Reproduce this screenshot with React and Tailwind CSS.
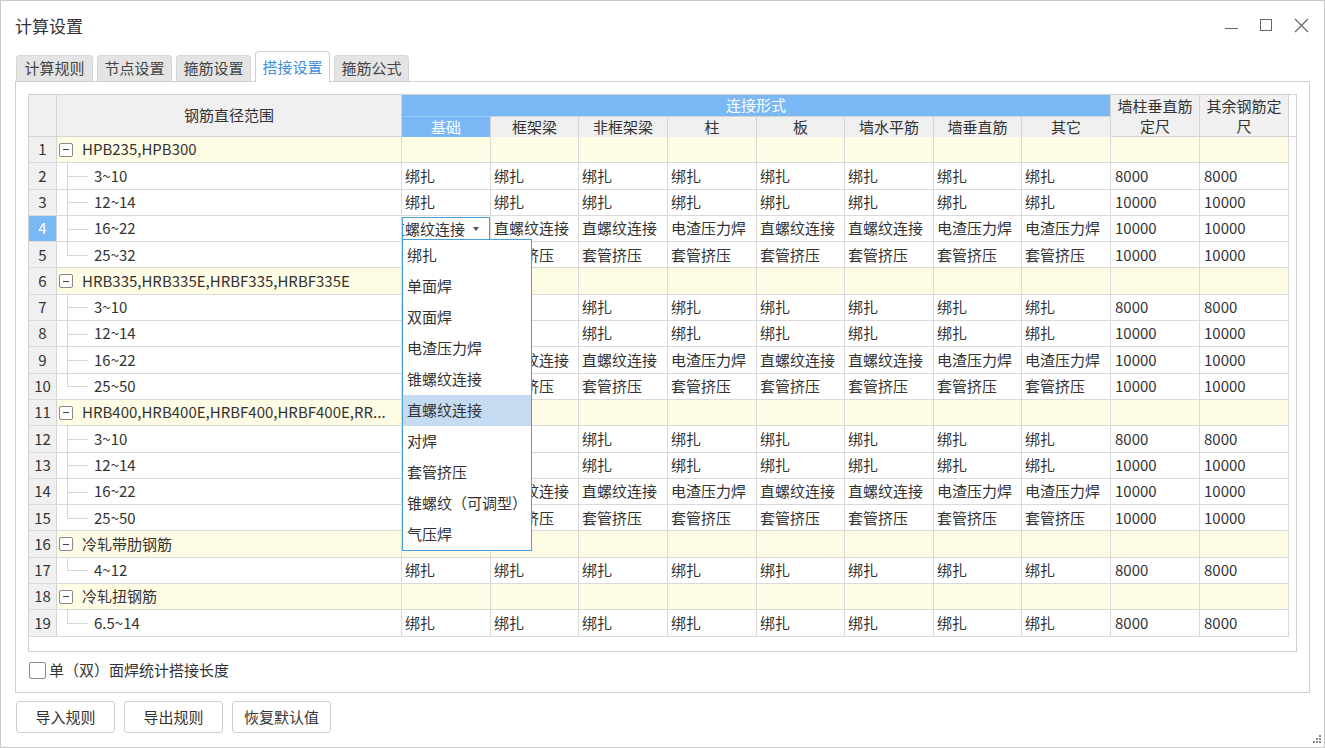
import React from "react";

const FONT = { fontFamily: '"Noto Sans CJK SC", "Noto Sans", sans-serif' };

const B = Array(8).fill("绑扎");
const T = Array(8).fill("套管挤压");
const Z = [
  "直螺纹连接",
  "直螺纹连接",
  "直螺纹连接",
  "电渣压力焊",
  "直螺纹连接",
  "直螺纹连接",
  "电渣压力焊",
  "电渣压力焊",
];

const rows = [
  { g: "HPB235,HPB300" },
  { n: "3~10", v: B, d: "8000" },
  { n: "12~14", v: B, d: "10000" },
  { n: "16~22", v: Z, d: "10000", edit: true },
  { n: "25~32", v: T, d: "10000", last: true },
  { g: "HRB335,HRB335E,HRBF335,HRBF335E" },
  { n: "3~10", v: B, d: "8000" },
  { n: "12~14", v: B, d: "10000" },
  { n: "16~22", v: Z, d: "10000" },
  { n: "25~50", v: T, d: "10000", last: true },
  { g: "HRB400,HRB400E,HRBF400,HRBF400E,RR..." },
  { n: "3~10", v: B, d: "8000" },
  { n: "12~14", v: B, d: "10000" },
  { n: "16~22", v: Z, d: "10000" },
  { n: "25~50", v: T, d: "10000", last: true },
  { g: "冷轧带肋钢筋" },
  { n: "4~12", v: B, d: "8000", last: true },
  { g: "冷轧扭钢筋" },
  { n: "6.5~14", v: B, d: "8000", last: true },
];

const colW = ["w-[89px]", "w-[88px]", "w-[89px]", "w-[89px]", "w-[88px]", "w-[89px]", "w-[88px]", "w-[89px]"];
const colNames = ["基础", "框架梁", "非框架梁", "柱", "板", "墙水平筋", "墙垂直筋", "其它"];

const options = [
  "绑扎",
  "单面焊",
  "双面焊",
  "电渣压力焊",
  "锥螺纹连接",
  "直螺纹连接",
  "对焊",
  "套管挤压",
  "锥螺纹（可调型）",
  "气压焊",
];

const tabs = ["计算规则", "节点设置", "箍筋设置", "搭接设置", "箍筋公式"];

// 下拉框
const Dropdown = () => (
  <div className="absolute top-[23px] left-[0px] z-20 w-[130px] border border-[#45a0dc] bg-white">
    {options.map((o, i) => (
      <div
        key={i}
        className={`h-[31px] flex items-center pl-[4px] text-[15px] text-[#333] whitespace-nowrap ${
          i === 5 ? "bg-[#c5dbf1]" : ""
        }`}
      >
        {o}
      </div>
    ))}
  </div>
);

const Row = ({ r, idx }) => {
  const group = !!r.g;
  const bg = group ? "bg-[#fffce6]" : "bg-white";
  return (
    <div className="flex h-[26.3px] border-b border-[#dadada] text-[15px] text-[#333]">
      <div
        className={`w-[28px] shrink-0 flex items-center justify-center border-r border-[#d4d4d4] ${
          idx === 4 ? "bg-[#7ab8f5] text-white" : "bg-[#f0f0f0]"
        }`}
      >
        {idx}
      </div>
      <div className={`w-[345px] shrink-0 relative flex items-center border-r border-[#dadada] ${bg}`}>
        {group ? (
          <>
            <div className="ml-[2px] w-[14px] h-[14px] border border-[#8a8a8a] rounded-[2px] flex items-center justify-center bg-white">
              <div className="w-[6px] h-px bg-[#444]" />
            </div>
            <span className="ml-[9px] whitespace-nowrap">{r.g}</span>
          </>
        ) : (
          <>
            <div
              className={`absolute left-[10px] top-0 w-px bg-[#d6d6d6] ${
                r.last ? "h-1/2" : "h-full"
              }`}
            />
            <div className="absolute left-[10px] top-1/2 w-[21px] h-px bg-[#d6d6d6]" />
            <span className="ml-[37px]">{r.n}</span>
          </>
        )}
      </div>
      {colW.map((w, i) => (
        <div
          key={i}
          className={`${w} shrink-0 relative flex items-center border-r border-[#dadada] ${bg}`}
        >
          {r.edit && i === 0 ? (
            <>
              <div className="absolute inset-0 top-px border border-[#45a0dc] bg-white flex items-center overflow-hidden">
                <span className="ml-[-13px] whitespace-nowrap">直螺纹连接</span>
                <svg width="6" height="4" viewBox="0 0 6 4" className="ml-[8px] shrink-0">
                  <path d="M0 0 L6 0 L3 4 Z" fill="#555" />
                </svg>
              </div>
              <Dropdown />
            </>
          ) : (
            !group && <span className="pl-[3px] whitespace-nowrap overflow-hidden">{r.v[i]}</span>
          )}
        </div>
      ))}
      {[0, 1].map((k) => (
        <div key={k} className={`w-[89px] shrink-0 flex items-center border-r border-[#dadada] ${bg}`}>
          {!group && <span className="pl-[4px]">{r.d}</span>}
        </div>
      ))}
    </div>
  );
};

export default function App() {
  return (
    <div
      className="w-[1325px] h-[748px] border border-[#c9c9c9] bg-white relative flex flex-col overflow-hidden"
      style={FONT}
    >
      {/* 标题栏 */}
      <div className="h-[50px] shrink-0 flex items-center pl-[14px] relative">
        <span className="text-[17px] text-[#333]">计算设置</span>
        <div className="absolute right-[15px] top-[17px] flex items-start">
          <div className="w-[13px] h-px bg-[#666] mt-[10px] mr-[22px]" />
          <div className="w-[12px] h-[12px] border border-[#666] mt-px mr-[22px]" />
          <svg width="15" height="15" viewBox="0 0 15 15">
            <path d="M1 1 L14 14 M14 1 L1 14" stroke="#666" strokeWidth="1.2" />
          </svg>
        </div>
      </div>

      {/* 标签页 */}
      <div className="h-[30px] shrink-0 flex items-end ml-[15px] gap-[4px]">
        {tabs.map((t, i) =>
          i === 3 ? (
            <div
              key={t}
              className="w-[75px] h-[31px] mb-[-1px] relative z-10 bg-white border border-b-0 border-[#cfcfcf] rounded-t-[4px] flex items-center justify-center text-[15px] text-[#3d8fe0]"
            >
              {t}
            </div>
          ) : (
            <div
              key={t}
              className={`${
                i === 0 ? "w-[77px]" : "w-[75px]"
              } h-[26px] bg-[#e4e4e4] border border-b-0 border-[#d6d6d6] rounded-t-[4px] flex items-center justify-center text-[15px] text-[#444]`}
            >
              {t}
            </div>
          )
        )}
      </div>

      {/* 内容面板 */}
      <div className="mx-[14px] h-[612px] shrink-0 border border-[#d0d0d0] flex flex-col">
        <div className="ml-[12px] mt-[12px] w-[1269px] h-[558px] border border-[#d0d0d0] bg-white">
          {/* 表头 */}
          <div className="flex h-[42px] border-b border-[#d4d4d4] text-[15px] text-[#333]">
            <div className="w-[28px] shrink-0 bg-[#f0f0f0] border-r border-[#d4d4d4]" />
            <div className="w-[345px] shrink-0 bg-[#f0f0f0] border-r border-[#d4d4d4] flex items-center justify-center">
              钢筋直径范围
            </div>
            <div className="w-[709px] shrink-0 flex flex-col">
              <div className="h-[21px] bg-[#7ab8f5] text-white flex items-center justify-center border-r border-[#d4d4d4]">
                连接形式
              </div>
              <div className="h-[21px] flex">
                {colW.map((w, i) => (
                  <div
                    key={i}
                    className={`${w} shrink-0 flex items-center justify-center border-r border-[#d4d4d4] ${
                      i === 0 ? "bg-[#7ab8f5] text-white border-t border-t-[#9ccaf7]" : "bg-[#f0f0f0] border-t"
                    }`}
                  >
                    {colNames[i]}
                  </div>
                ))}
              </div>
            </div>
            <div className="w-[89px] shrink-0 bg-[#f0f0f0] border-r border-[#d4d4d4] flex flex-col items-center justify-center leading-[20px]">
              <span>墙柱垂直筋</span>
              <span>定尺</span>
            </div>
            <div className="w-[89px] shrink-0 bg-[#f0f0f0] border-r border-[#d4d4d4] flex flex-col items-center justify-center leading-[20px]">
              <span>其余钢筋定</span>
              <span>尺</span>
            </div>
          </div>
          <div className="w-[1260px] relative">
            {rows.map((r, i) => (
              <Row key={i} r={r} idx={i + 1} />
            ))}
          </div>
        </div>

        <label className="flex items-center ml-[13px] mt-[7px] text-[15px] text-[#333]">
          <span className="w-[17px] h-[17px] border border-[#8a8a8a] rounded-[2px] bg-white" />
          <span className="ml-[3px]">单（双）面焊统计搭接长度</span>
        </label>
      </div>

      {/* 底部按钮 */}
      <div className="flex ml-[15px] mt-[8px] gap-[9px]">
        {["导入规则", "导出规则", "恢复默认值"].map((b) => (
          <button
            key={b}
            className="w-[99px] h-[32px] border border-[#cfcfcf] rounded-[3px] bg-white text-[15px] text-[#333]"
          >
            {b}
          </button>
        ))}
      </div>

      {/* 右下角拖拽 */}
      <svg width="10" height="10" viewBox="0 0 10 10" className="absolute right-[3px] bottom-[3px]">
        {[
          [8, 0],
          [8, 3],
          [5, 3],
          [8, 6],
          [5, 6],
          [2, 6],
        ].map(([x, y], i) => (
          <rect key={i} x={x} y={y + 1} width="2" height="2" fill="#8a8a8a" />
        ))}
      </svg>
    </div>
  );
}
